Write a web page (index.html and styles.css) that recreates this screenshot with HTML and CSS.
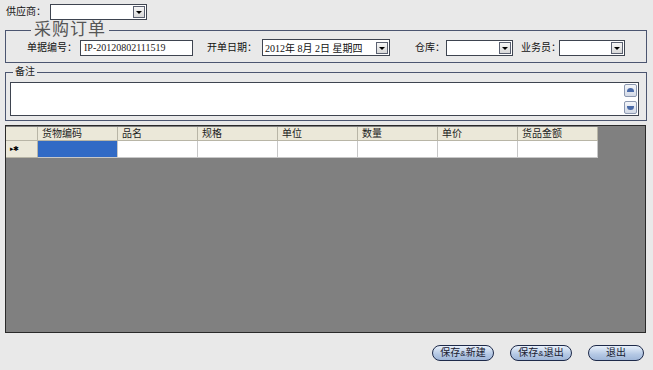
FILE: index.html
```html
<!DOCTYPE html>
<html lang="zh-CN">
<head>
  <meta charset="UTF-8" />
  <title>采购订单</title>
  <link rel="stylesheet" href="styles.css">
</head>
<body>

  <div class="top-row">
    <span class="label">供应商：</span>
    <div class="combo w-supplier"><span class="value"></span><span class="drop"></span></div>
  </div>

  <!-- 订单头 -->
  <fieldset class="group order">
    <legend>采购订单</legend>
    <div class="fields">
      <span class="label">单据编号：</span>
      <div class="textbox w-no">IP-20120802111519</div>
      <span class="label l-date">开单日期：</span>
      <div class="combo w-date"><span class="value">2012年 8月 2日 星期四</span><span class="drop"></span></div>
      <span class="label l-store">仓库：</span>
      <div class="combo w-store"><span class="value"></span><span class="drop"></span></div>
      <span class="label l-clerk">业务员：</span>
      <div class="combo w-clerk"><span class="value"></span><span class="drop"></span></div>
    </div>
  </fieldset>

  <!-- 备注 -->
  <fieldset class="group memo">
    <legend>备注</legend>
    <div class="memo-box">
      <div class="scroll">
        <span class="sbtn up"></span>
        <span class="sbtn down"></span>
      </div>
    </div>
  </fieldset>

  <!-- 明细表格 -->
  <div class="grid">
    <div class="grow head">
      <div class="rh"></div>
      <div class="cell">货物编码</div>
      <div class="cell">品名</div>
      <div class="cell">规格</div>
      <div class="cell">单位</div>
      <div class="cell">数量</div>
      <div class="cell">单价</div>
      <div class="cell">货品金额</div>
    </div>
    <div class="grow data">
      <div class="rh"><span class="marker">▸✱</span></div>
      <div class="cell sel"></div>
      <div class="cell"></div>
      <div class="cell"></div>
      <div class="cell"></div>
      <div class="cell"></div>
      <div class="cell"></div>
      <div class="cell"></div>
    </div>
  </div>

  <div class="actions">
    <button class="pill b-new">保存<small>&amp;</small>新建</button>
    <button class="pill b-save">保存<small>&amp;</small>退出</button>
    <button class="pill b-exit">退出</button>
  </div>

</body>
</html>
```

FILE: styles.css
```css
* {
  box-sizing: border-box;
}

body {
  margin: 0;
  width: 653px;
  height: 370px;
  background-color: #e9e9e9;
  font-family: "Liberation Sans", "Noto Sans CJK SC", sans-serif;
  font-size: 11px;
  color: #111;
  overflow: hidden;
}

.label {
  font-size: 10px;
  line-height: 16px;
  white-space: nowrap;
}

/* 下拉框 */
.combo, .textbox {
  height: 16px;
  background: #fff;
  border: 1px solid #3e4450;
  display: flex;
  align-items: center;
}

.combo .value {
  flex: 1;
  padding-left: 2px;
  font-family: "Liberation Serif", "Noto Sans CJK SC", serif;
  font-size: 10px;
  white-space: nowrap;
}

.combo .drop {
  width: 12px;
  height: 12px;
  margin-right: 1px;
  border: 1px solid #5a6070;
  background: linear-gradient(#f6f6f6, #d8d8d8);
  position: relative;
}

.combo .drop::after {
  content: "";
  position: absolute;
  left: 2px;
  top: 4px;
  border-left: 3px solid transparent;
  border-right: 3px solid transparent;
  border-top: 3px solid #000;
}

.textbox {
  padding-left: 3px;
  font-family: "Liberation Serif", serif;
  font-size: 10px;
  color: #222;
}

.top-row {
  display: flex;
  align-items: center;
  padding: 4px 0 0 6px;
  height: 20px;
}

.top-row .label {
  width: 44px;
}

.w-supplier { width: 97px; }

/* 分组框 */
.group {
  margin: 2px 6px 0 5px;
  border: 1px solid #4b5570;
  min-width: 0;
}

.group legend {
  padding: 0 3px;
  margin-left: 4px;
  color: #555;
}

.order {
  padding: 1px 0 6px 21px;
}

.order legend {
  font-size: 17px;
  line-height: 16px;
  letter-spacing: 1px;
}

.fields {
  display: flex;
  align-items: center;
  height: 17px;
}

.fields .label { width: 53px; }
.w-no { width: 113px; }
.l-date { margin-left: 14px; width: 55px !important; }
.w-date { width: 128px; height: 17px; }
.l-store { margin-left: 25px; width: 31px !important; }
.w-store { width: 67px; }
.l-clerk { margin-left: 8px; width: 38px !important; }
.w-clerk { width: 66px; }

.memo {
  margin-top: 3px;
  padding: 4px 7px 4px 4px;
}

.memo legend {
  font-size: 10px;
  line-height: 12px;
  margin-left: 3px;
  padding: 0 2px;
  color: #222;
}

.memo-box {
  height: 34px;
  background: #fff;
  border: 1px solid #3e4450;
  display: flex;
  justify-content: flex-end;
}

.scroll {
  display: flex;
  flex-direction: column;
  justify-content: space-between;
  padding: 1px 1px 1px 0;
}

.sbtn {
  width: 13px;
  height: 13px;
  border: 1px solid #8c98b0;
  border-radius: 2px;
  background: linear-gradient(#f4f6fa, #d4dae6);
  position: relative;
}

.sbtn::after {
  content: "";
  position: absolute;
  left: 2px;
  width: 7px;
  height: 4px;
  background: #4a6aa8;
}

.sbtn.up::after {
  top: 3px;
  border-radius: 4px 4px 0 0;
}

.sbtn.down::after {
  top: 4px;
  border-radius: 0 0 4px 4px;
}

/* 表格 */
.grid {
  margin: 4px 7px 0 5px;
  height: 208px;
  background: #808080;
  border: 1px solid #2a2a2a;
  padding-top: 1px;
}

.grow {
  display: flex;
}

.grow .rh {
  width: 32px;
  background: #ebe8d9;
  border-right: 1px solid #b8b5a6;
  border-bottom: 1px solid #b8b5a6;
}

.grow .cell {
  width: 80px;
  border-right: 1px solid #b8b5a6;
  border-bottom: 1px solid #b8b5a6;
  padding-left: 4px;
  white-space: nowrap;
}

.head {
  height: 14px;
}

.head .cell {
  background: #ebe8d9;
  font-size: 10px;
  line-height: 13px;
  color: #222;
}

.data {
  height: 17px;
}

.data .rh {
  display: flex;
  align-items: center;
  padding-left: 4px;
}

.marker {
  font-size: 7px;
  letter-spacing: -1px;
  color: #000;
}

.data .cell {
  background: #fff;
  border-color: #c8c8c8;
}

.data .cell.sel {
  background: #316ac5;
}

/* 按钮 */
.actions {
  display: flex;
  justify-content: flex-end;
  padding: 12px 9px 0 0;
  gap: 16px;
}

.pill {
  height: 16px;
  border: 1px solid #1e2a4a;
  border-radius: 8px;
  background: linear-gradient(#e8f0fa, #b4c8e4 60%, #9fb6d8);
  font-family: "Liberation Sans", "Noto Sans CJK SC", sans-serif;
  font-size: 10px;
  line-height: 12px;
  color: #1a2030;
  padding: 0;
}

.pill small {
  font-size: 8px;
}

.b-new { width: 62px; }
.b-save { width: 62px; }
.b-exit { width: 56px; }
```
